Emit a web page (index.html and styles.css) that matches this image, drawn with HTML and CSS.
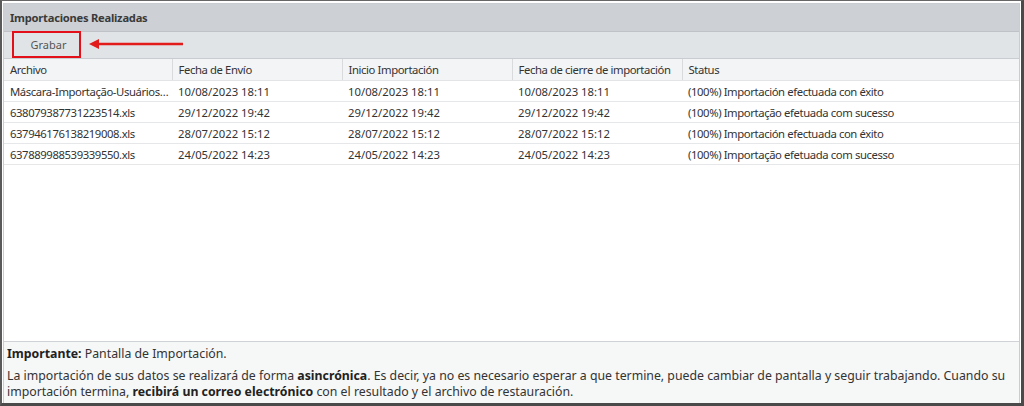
FILE: index.html
```html
<!DOCTYPE html>
<html lang="es">
<head>
  <meta charset="UTF-8" />
  <meta name="viewport" content="width=device-width, initial-scale=1.0"/>
  <title>Importaciones Realizadas</title>
  <link rel="stylesheet" href="styles.css">
</head>
<body>
  <div class="window">
    <div class="panel">
      <div class="panel-title">Importaciones Realizadas</div>
      <div class="toolbar">
        <button class="btn">Grabar</button>
        <svg class="arrow" width="96" height="12" viewBox="0 0 96 12">
          <path d="M8 6 H94" stroke="#e21b1b" stroke-width="2.4" fill="none"/>
          <path d="M0 6 L10 1 L10 11 Z" fill="#e21b1b"/>
        </svg>
      </div>
      <div class="grid">
        <table>
          <colgroup>
            <col class="c1"><col class="c2"><col class="c3"><col class="c4"><col>
          </colgroup>
          <thead>
            <tr>
              <th>Archivo</th>
              <th>Fecha de Envío</th>
              <th>Inicio Importación</th>
              <th>Fecha de cierre de importación</th>
              <th>Status</th>
            </tr>
          </thead>
          <tbody>
            <tr>
              <td>Máscara-Importação-Usuários-Clientes.xls</td>
              <td class="date">10/08/2023 18:11</td>
              <td class="date">10/08/2023 18:11</td>
              <td class="date">10/08/2023 18:11</td>
              <td>(100%) Importación efectuada con éxito</td>
            </tr>
            <tr>
              <td>638079387731223514.xls</td>
              <td class="date">29/12/2022 19:42</td>
              <td class="date">29/12/2022 19:42</td>
              <td class="date">29/12/2022 19:42</td>
              <td>(100%) Importação efetuada com sucesso</td>
            </tr>
            <tr>
              <td>637946176138219008.xls</td>
              <td class="date">28/07/2022 15:12</td>
              <td class="date">28/07/2022 15:12</td>
              <td class="date">28/07/2022 15:12</td>
              <td>(100%) Importación efectuada con éxito</td>
            </tr>
            <tr>
              <td>637889988539339550.xls</td>
              <td class="date">24/05/2022 14:23</td>
              <td class="date">24/05/2022 14:23</td>
              <td class="date">24/05/2022 14:23</td>
              <td>(100%) Importação efetuada com sucesso</td>
            </tr>
          </tbody>
        </table>
      </div>
      <div class="notice">
        <p class="notice-head"><b>Importante:</b> Pantalla de Importación.</p>
        <p>La importación de sus datos se realizará de forma <b>asincrónica</b>. Es decir, ya no es necesario esperar a que termine, puede cambiar de pantalla y seguir trabajando. Cuando su importación termina, <b>recibirá un correo electrónico</b> con el resultado y el archivo de restauración.</p>
      </div>
    </div>
  </div>
</body>
</html>
```

FILE: styles.css
```css
html, body {
  margin: 0;
  padding: 0;
  background: #fff;
}
body {
  font-family: "Noto Sans", "Open Sans", sans-serif;
  font-size: 12px;
  color: #333;
}
.window {
  width: 1024px;
  height: 406px;
  box-sizing: border-box;
  border-top: 1px solid #666;
  border-left: 2px solid #5a5a5a;
  border-right: 3px solid #4a4a4a;
  border-bottom: 3px solid #4a4a4a;
  padding: 2px 0 0 1px;
  display: flex;
}
.panel {
  flex: 1;
  display: flex;
  flex-direction: column;
  border: 1px solid #c9cdd1;
  border-bottom: none;
  margin-right: 1px;
}
.panel-title {
  height: 27px;
  line-height: 27px;
  padding-left: 6px;
  background: #cdd1d5;
  font-weight: bold;
  font-size: 11.2px;
  letter-spacing: -0.25px;
  color: #3a3a3a;
  border-bottom: 1px solid #bfc3c7;
}
.toolbar {
  height: 26px;
  background: #e1e4e7;
  display: flex;
  align-items: center;
  border-bottom: 1px solid #c9ccd0;
}
.btn {
  margin-left: 8px;
  height: 27px;
  width: 69px;
  margin-top: -1px;
  border: 2px solid #e3101a;
  background: transparent;
  font: inherit;
  font-size: 11px;
  color: #555;
  padding: 0 0 0 4px;
}
.arrow {
  margin-left: 8px;
  margin-top: -3px;
}
.grid {
  flex: 1;
  background: #fff;
}
table {
  width: 100%;
  border-collapse: collapse;
  table-layout: fixed;
  font-size: 11.3px;
  letter-spacing: -0.4px;
}
col.c1, col.c2, col.c3, col.c4 {
  width: 170px;
}
col.c1 {
  width: 168px;
}
th, td {
  text-align: left;
  padding: 0 3px 0 6px;
  white-space: nowrap;
  overflow: hidden;
  text-overflow: ellipsis;
}
td.date {
  letter-spacing: 0;
}
th {
  height: 21px;
  font-weight: normal;
  background: #f3f4f5;
  border-right: 1px solid #d8dadc;
  border-bottom: 1px solid #e2e4e6;
}
th:last-child {
  border-right: none;
}
td {
  height: 20px;
  border-bottom: 1px solid #e6e7e9;
  color: #333;
}
.notice {
  height: 57px;
  background: #f6f7f7;
  border-top: 1px solid #cfd3d6;
  padding: 4px 4px 0 3px;
  font-size: 12.3px;
  color: #333;
}
.notice p {
  margin: 0;
  line-height: 16px;
}
.notice .notice-head {
  margin-bottom: 6px;
}
.notice b {
  color: #222;
}
```
